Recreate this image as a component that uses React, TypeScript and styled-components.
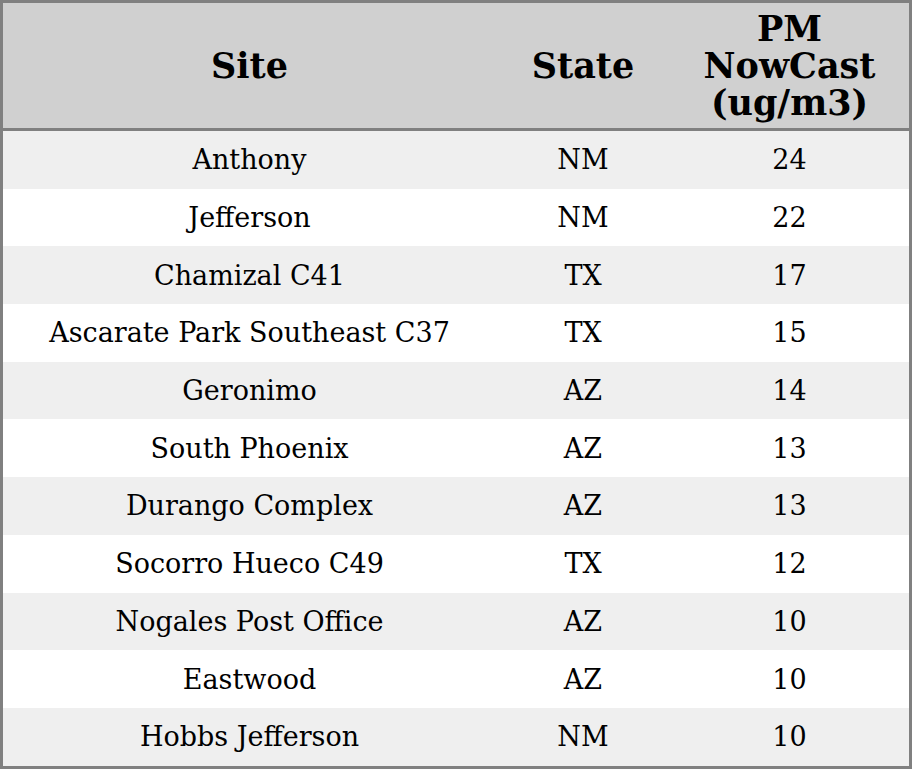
import { createGlobalStyle, styled } from "styled-components";

const GlobalStyle = createGlobalStyle`
    html, body {
        margin: 0;
        padding: 0;
        background: #ffffff;
    }
`;

const Table = styled.table`
    width: 912px;
    border-collapse: collapse;
    border: 3px solid #808080;
    font-family: "DejaVu Serif", serif;
    color: #000000;
`;

const HeadRow = styled.tr`
    background: #d0d0d0;
    border-bottom: 3px solid #808080;
`;

const HeadCell = styled.th<{ $width: number }>`
    width: ${(p) => p.$width}px;
    height: 125px;
    padding: 0;
    font-size: 35px;
    font-weight: bold;
    line-height: 37px;
    text-align: center;
    vertical-align: middle;
`;

const Row = styled.tr<{ $striped: boolean }>`
    background: ${(p) => (p.$striped ? "#efefef" : "#ffffff")};
`;

const Cell = styled.td`
    height: 57.7px;
    padding: 0;
    font-size: 27px;
    text-align: center;
    vertical-align: middle;
`;

const rows = [
    ["Anthony", "NM", 24],
    ["Jefferson", "NM", 22],
    ["Chamizal C41", "TX", 17],
    ["Ascarate Park Southeast C37", "TX", 15],
    ["Geronimo", "AZ", 14],
    ["South Phoenix", "AZ", 13],
    ["Durango Complex", "AZ", 13],
    ["Socorro Hueco C49", "TX", 12],
    ["Nogales Post Office", "AZ", 10],
    ["Eastwood", "AZ", 10],
    ["Hobbs Jefferson", "NM", 10],
];

export default function App() {
    return (
        <>
            <GlobalStyle />
            <Table>
                <thead>
                    <HeadRow>
                        <HeadCell $width={493}>Site</HeadCell>
                        <HeadCell $width={174}>State</HeadCell>
                        <HeadCell $width={239}>
                            PM
                            <br />
                            NowCast
                            <br />
                            (ug/m3)
                        </HeadCell>
                    </HeadRow>
                </thead>
                <tbody>
                    {rows.map(([site, state, value], i) => (
                        <Row key={site} $striped={i % 2 === 0}>
                            <Cell>{site}</Cell>
                            <Cell>{state}</Cell>
                            <Cell>{value}</Cell>
                        </Row>
                    ))}
                </tbody>
            </Table>
        </>
    );
}
